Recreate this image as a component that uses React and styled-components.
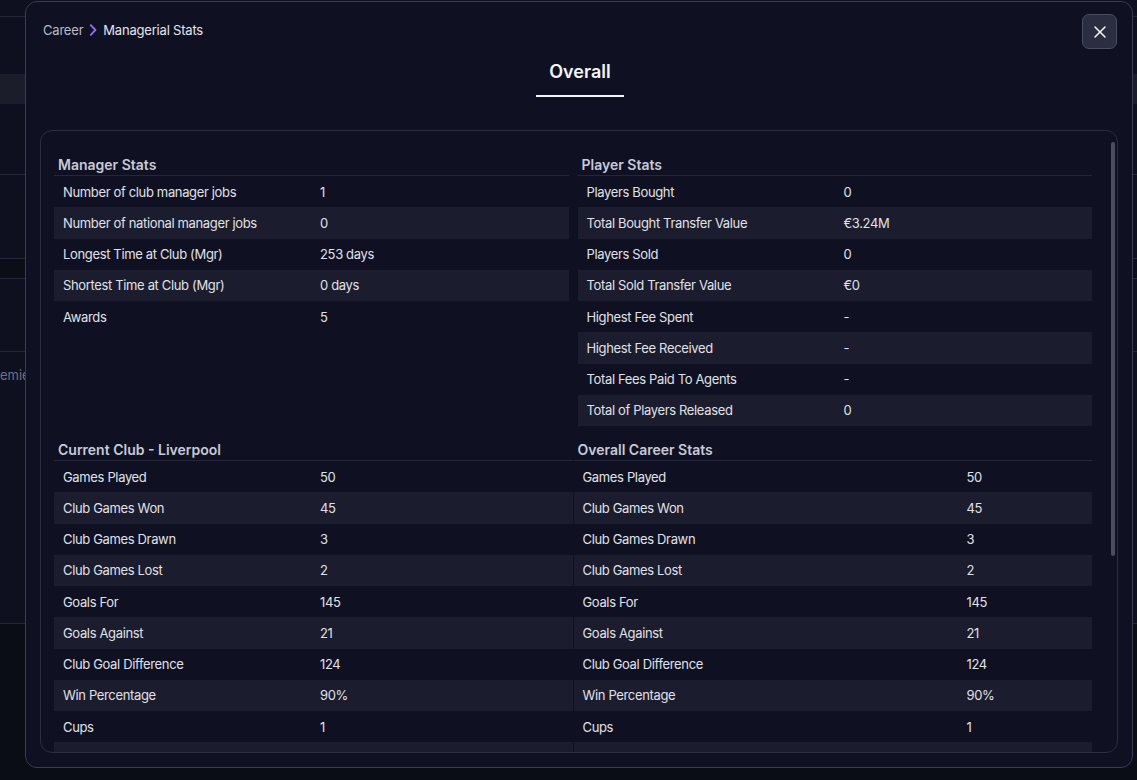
import React from "react";
import styled, { createGlobalStyle } from "styled-components";
import { X } from "lucide-react";

const GlobalStyle = createGlobalStyle`
  html, body {
    margin: 0;
    padding: 0;
    background: #0c0e18;
    font-family: Inter, "Noto Sans", sans-serif;
    -webkit-font-smoothing: antialiased;
  }
  * { box-sizing: border-box; }
`;

/* page behind the dialog */
const BgPage = styled.div`
  width: 100vw;
  height: 100vh;
  display: flex;
  flex-direction: column;
  background: #0e1020;
  overflow: hidden;
`;

const BgBlock = styled.div`
  height: ${(p) => p.h}px;
  flex-shrink: 0;
  background: ${(p) => p.bg || "transparent"};
  border-bottom: ${(p) => (p.line ? "1px solid #25283a" : "none")};
  color: #6f7284;
  font-size: 13px;
  display: flex;
  align-items: center;
`;

const BgFooter = styled.div`
  flex: 1;
  background: #0b0d16;
`;

/* dialog */
const Modal = styled.div`
  position: fixed;
  left: 25px;
  top: 1px;
  width: 1108px;
  height: 767px;
  background: #0f1122;
  border: 1px solid #3a3c4f;
  border-radius: 12px;
  display: flex;
  flex-direction: column;
  padding: 12px 14px 14px 14px;
`;

const TopBar = styled.div`
  display: flex;
  align-items: flex-start;
  justify-content: space-between;
  padding-left: 3px;
`;

const Crumbs = styled.div`
  display: flex;
  align-items: center;
  gap: 6px;
  padding-top: 8px;
  line-height: 16px;
  font-size: 13px;
  letter-spacing: -0.2px;
`;

const Crumb = styled.span`
  color: ${(p) => (p.current ? "#e3e4ec" : "#b9bbc8")};
`;

const CloseButton = styled.button`
  width: 35px;
  height: 35px;
  margin-right: 1px;
  border-radius: 7px;
  background: #2b2d40;
  border: 1px solid #4a4c60;
  color: #f1f2f6;
  display: flex;
  align-items: center;
  justify-content: center;
  padding: 0;
  cursor: pointer;
`;

const Tabs = styled.div`
  display: flex;
  justify-content: center;
  margin-top: 10px;
`;

const Tab = styled.div`
  padding: 1px 13px 11px;
  line-height: 24px;
  font-size: 18px;
  font-weight: 600;
  color: #f4f5f9;
  border-bottom: 2px solid #f4f5f9;
  margin-left: 2px;
`;

const Panel = styled.div`
  position: relative;
  margin-top: 33px;
  flex: 1;
  border: 1px solid #2b2e40;
  border-radius: 12px;
  overflow: hidden;
  padding: 24px 25px 0 13px;
`;

const Thumb = styled.div`
  position: absolute;
  right: 2px;
  top: 11px;
  width: 4px;
  height: 414px;
  border-radius: 2px;
  background: #4b4d63;
`;

const Grid = styled.div`
  display: grid;
  grid-template-columns: 1fr 1fr;
  column-gap: ${(p) => p.gap}px;
  margin-bottom: ${(p) => p.mb || 0}px;
`;

const Section = styled.div`
  display: flex;
  flex-direction: column;
`;

const SectionTitle = styled.div`
  height: 21px;
  line-height: 20px;
  padding-left: 4px;
  font-size: 14px;
  font-weight: 600;
  color: #c7c9d8;
  border-bottom: 1px solid #24273a;
`;

const Row = styled.div`
  display: grid;
  grid-template-columns: ${(p) => p.labelWidth}px 1fr;
  height: 31.25px;
  flex-shrink: 0;
  align-items: center;
  background: ${(p) => (p.shaded ? "#1b1c2d" : "transparent")};
  font-size: 13px;
  letter-spacing: -0.35px;
  color: #e0e1e8;
`;

const Cell = styled.span`
  padding-left: 9px;
  white-space: nowrap;
`;

const managerStats = [
  ["Number of club manager jobs", "1"],
  ["Number of national manager jobs", "0"],
  ["Longest Time at Club (Mgr)", "253 days"],
  ["Shortest Time at Club (Mgr)", "0 days"],
  ["Awards", "5"],
];

const playerStats = [
  ["Players Bought", "0"],
  ["Total Bought Transfer Value", "€3.24M"],
  ["Players Sold", "0"],
  ["Total Sold Transfer Value", "€0"],
  ["Highest Fee Spent", "-"],
  ["Highest Fee Received", "-"],
  ["Total Fees Paid To Agents", "-"],
  ["Total of Players Released", "0"],
];

// the last row only peeks out under the panel's bottom edge
const clubStats = [
  ["Games Played", "50"],
  ["Club Games Won", "45"],
  ["Club Games Drawn", "3"],
  ["Club Games Lost", "2"],
  ["Goals For", "145"],
  ["Goals Against", "21"],
  ["Club Goal Difference", "124"],
  ["Win Percentage", "90%"],
  ["Cups", "1"],
  ["", ""],
];

function StatSection({ title, rows, labelWidth }) {
  return (
    <Section>
      <SectionTitle>{title}</SectionTitle>
      {rows.map(([label, value], i) => (
        <Row key={i} shaded={i % 2 === 1} labelWidth={labelWidth}>
          <Cell>{label}</Cell>
          <Cell>{value}</Cell>
        </Row>
      ))}
    </Section>
  );
}

function Chevron() {
  return (
    <svg width="8" height="12" viewBox="0 0 8 12" fill="none">
      <path d="M1.8 1.2 6.4 6 1.8 10.8" stroke="#8f6df2" strokeWidth="1.9" strokeLinecap="round" strokeLinejoin="round" />
    </svg>
  );
}

export default function App() {
  return (
    <>
      <GlobalStyle />
      <BgPage>
        <BgBlock h={17} line />
        <BgBlock h={57} />
        <BgBlock h={30} bg="#1b1e2a" />
        <BgBlock h={71} line />
        <BgBlock h={84} line />
        <BgBlock h={20} bg="#0b0d17" line />
        <BgBlock h={73} line />
        <BgBlock h={46}>emie</BgBlock>
        <BgBlock h={226} line />
        <BgFooter />
      </BgPage>

      <Modal>
        <TopBar>
          <Crumbs>
            <Crumb>Career</Crumb>
            <Chevron />
            <Crumb current>Managerial Stats</Crumb>
          </Crumbs>
          <CloseButton aria-label="Close">
            <X size={20} strokeWidth={1.9} />
          </CloseButton>
        </TopBar>

        <Tabs>
          <Tab>Overall</Tab>
        </Tabs>

        <Panel>
          <Grid gap={9} mb={14}>
            <StatSection title="Manager Stats" rows={managerStats} labelWidth={257} />
            <StatSection title="Player Stats" rows={playerStats} labelWidth={257} />
          </Grid>
          <Grid gap={1}>
            <StatSection title="Current Club - Liverpool" rows={clubStats} labelWidth={257} />
            <StatSection title="Overall Career Stats" rows={clubStats} labelWidth={384} />
          </Grid>
          <Thumb />
        </Panel>
      </Modal>
    </>
  );
}
